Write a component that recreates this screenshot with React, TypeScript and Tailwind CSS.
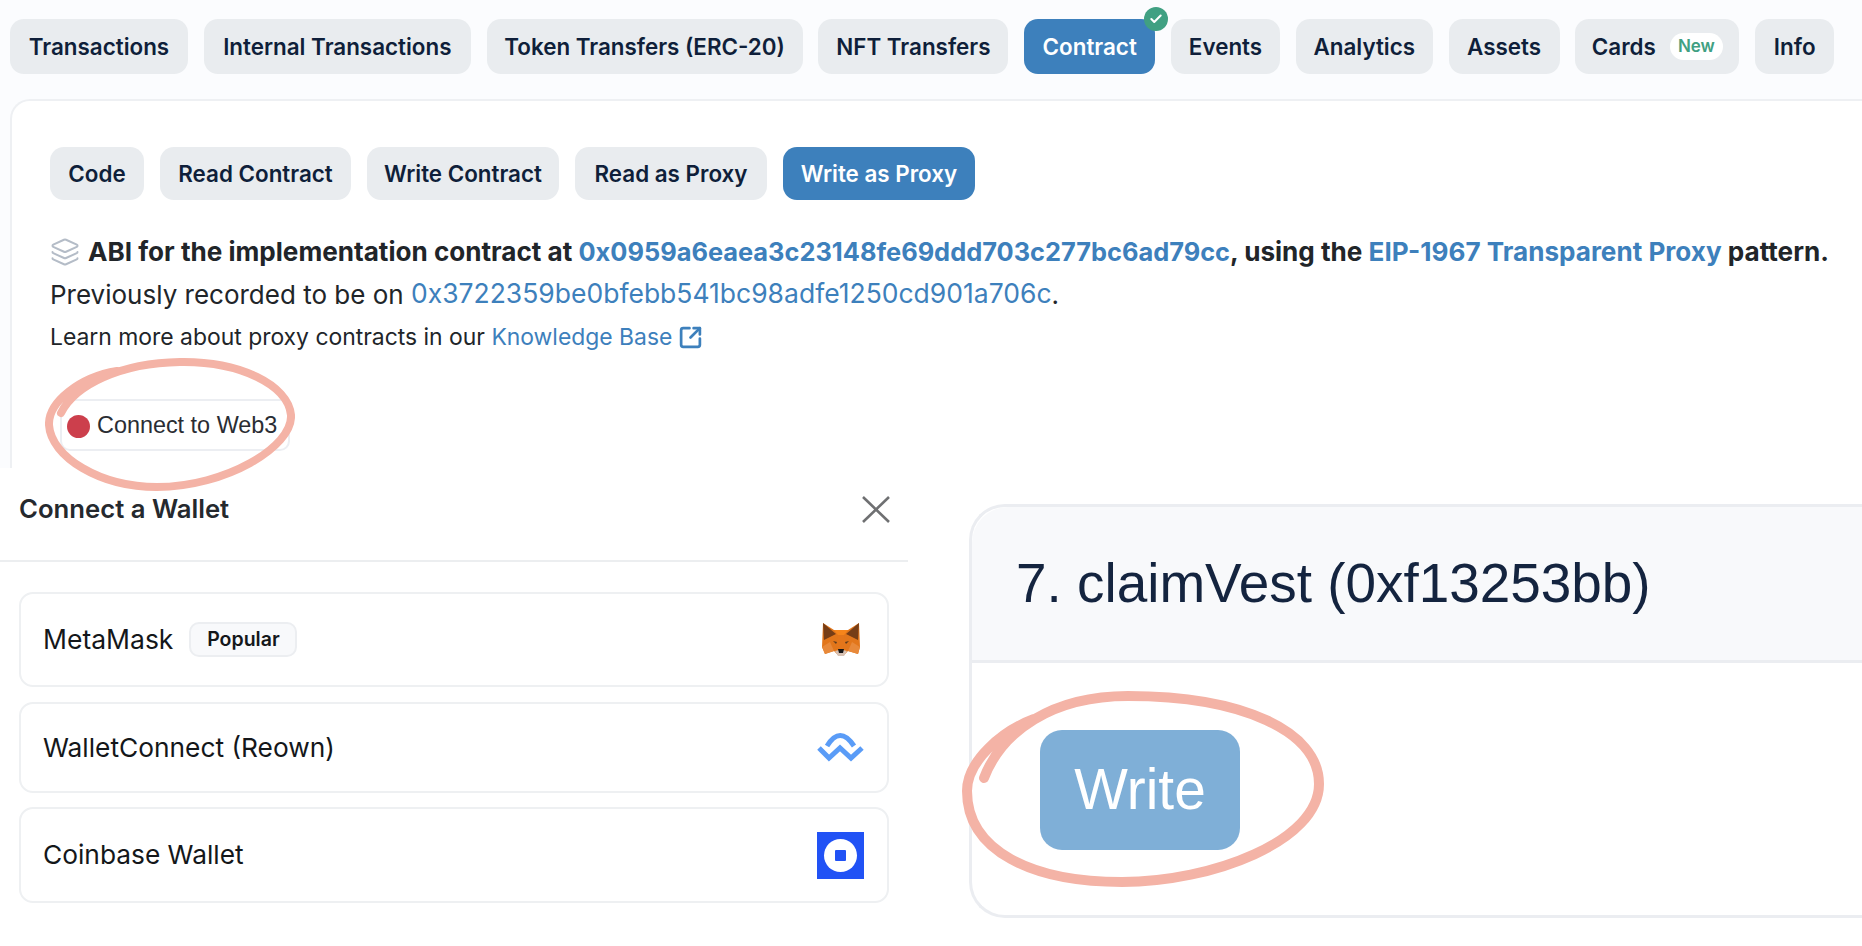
import { Layers, SquareArrowOutUpRight, Check } from 'lucide-react'

const tabs = [
  { label: 'Transactions', w: 'w-[178px]' },
  { label: 'Internal Transactions', w: 'w-[267px]' },
  { label: 'Token Transfers (ERC-20)', w: 'w-[316px]' },
  { label: 'NFT Transfers', w: 'w-[190px]' },
  { label: 'Contract', w: 'w-[131px]', active: true, check: true },
  { label: 'Events', w: 'w-[109px]' },
  { label: 'Analytics', w: 'w-[137px]' },
  { label: 'Assets', w: 'w-[111px]' },
  { label: 'Cards', w: 'w-[164px]', badge: 'New' },
  { label: 'Info', w: 'w-[79px]' },
]

const subTabs = [
  { label: 'Code', w: 'w-[94px]' },
  { label: 'Read Contract', w: 'w-[191px]' },
  { label: 'Write Contract', w: 'w-[192px]' },
  { label: 'Read as Proxy', w: 'w-[192px]' },
  { label: 'Write as Proxy', w: 'w-[192px]', active: true },
]

function FoxIcon() {
  return (
    <svg width="38" height="35" viewBox="0 0 38 35">
      <polygon points="1,1 12,8 26,8 37,1 38,25 36,32 26,29 21,34 17,34 12,29 3,32 0,25" fill="#e2761b" />
      <polygon points="12,8 26,8 22,13 16,13" fill="#f6851b" />
      <polygon points="1,1 14,12 2,18" fill="#763d16" />
      <polygon points="37,1 24,12 36,18" fill="#763d16" />
      <polygon points="16,13 22,13 24,24 19,28 14,24" fill="#e4761b" />
      <polygon points="0,25 8,20 12,29 3,32" fill="#e8893a" />
      <polygon points="38,25 30,20 26,29 36,32" fill="#e8893a" />
      <polygon points="11,19 15,20 14,22" fill="#5c3a1e" />
      <polygon points="27,19 23,20 24,22" fill="#5c3a1e" />
      <polygon points="13,29 17,28 21,28 25,29 22,34 16,34" fill="#d7c1b3" />
      <polygon points="16,27 22,27 21,31 17,31" fill="#161616" />
    </svg>
  )
}

function WalletConnectIcon() {
  return (
    <svg width="47" height="30" viewBox="0 0 47 30" fill="none" stroke="#5a9cf7" strokeWidth="5">
      <path d="M10 13 Q23 -8 37 13" />
      <path d="M2 15 L12 25 L23 15 L34 25 L45 15" />
    </svg>
  )
}

function CoinbaseIcon() {
  return (
    <div className="flex h-[47px] w-[47px] items-center justify-center bg-[#2152f5]">
      <div className="flex h-[33px] w-[33px] items-center justify-center rounded-full bg-white">
        <div className="h-[11px] w-[11px] rounded-[1px] bg-[#2152f5]" />
      </div>
    </div>
  )
}

export default function App() {
  return (
    <div className="flex h-[946px] w-[1862px] flex-col overflow-hidden bg-white font-['Inter',sans-serif]">
      <div className="flex h-[468px] flex-col bg-[#fbfcfe] pl-[10px] pt-[19px]">
        <div className="flex gap-[15.8px]">
          {tabs.map(t => (
            <div
              key={t.label}
              className={`relative flex h-[55px] items-center justify-center gap-[14px] rounded-[14px] text-[22.4px] font-semibold ${t.w} ${t.active ? 'bg-[#3d80bc] text-white' : 'bg-[#e9ecef] text-[#0f1f3a]'}`}
            >
              {t.label}
              {t.badge && (
                <span className="rounded-full bg-white px-[8px] py-[3px] text-[17px] font-semibold leading-[21px] text-[#40a082]">{t.badge}</span>
              )}
              {t.check && (
                <span className="absolute -right-[13px] -top-[12px] flex h-[24px] w-[24px] items-center justify-center rounded-full bg-[#40a082]">
                  <Check size={14} strokeWidth={3.5} className="text-white" />
                </span>
              )}
            </div>
          ))}
        </div>

        <div className="mt-[25px] flex-1 rounded-tl-[20px] border-l-2 border-t-2 border-[#eef0f3] bg-white pl-[38px] pt-[46px]">
          <div className="flex gap-[16px]">
            {subTabs.map(t => (
              <div
                key={t.label}
                className={`flex h-[53px] items-center justify-center rounded-[14px] text-[22.4px] font-semibold ${t.w} ${t.active ? 'bg-[#3d80bc] text-white' : 'bg-[#e9ecef] text-[#0f1f3a]'}`}
              >
                {t.label}
              </div>
            ))}
          </div>

          <div className="mt-[31px] flex h-[42px] items-center whitespace-nowrap text-[26.1px] font-bold text-[#212529]">
            <Layers size={30} strokeWidth={1.6} className="mr-[8px] text-[#b4bcc7]" />
            <span>ABI for the implementation contract at&nbsp;</span>
            <span className="text-[25.4px] text-[#3d80bc]">0x0959a6eaea3c23148fe69ddd703c277bc6ad79cc</span>
            <span>, using the&nbsp;</span>
            <span className="text-[#3d80bc]">EIP-1967 Transparent Proxy</span>
            <span>&nbsp;pattern.</span>
          </div>
          <div className="flex h-[42px] items-center whitespace-nowrap text-[26px] text-[#212529]">
            <span>Previously recorded to be on&nbsp;</span>
            <span className="text-[26.5px] text-[#3d80bc]">0x3722359be0bfebb541bc98adfe1250cd901a706c</span>
            <span>.</span>
          </div>
          <div className="flex h-[42px] items-center whitespace-nowrap pt-[2px] text-[22.9px] text-[#212529]">
            <span>Learn more about proxy contracts in our&nbsp;</span>
            <span className="text-[#3d80bc]">Knowledge Base</span>
            <SquareArrowOutUpRight size={25} strokeWidth={2.6} className="ml-[6px] text-[#3d80bc]" />
          </div>

          <div className="relative z-10 ml-[10px] mt-[42px] flex h-[52px] w-[230px] items-center gap-[7px] rounded-[10px] border-2 border-[#eceef2] bg-white pl-[5px] pt-[2px] font-['Liberation_Sans',sans-serif] text-[23.4px] text-[#2a2d33]">
            <span className="h-[23px] w-[23px] rounded-full bg-[#cc3f4c]" />
            Connect to Web3
            <svg className="absolute -left-[17px] -top-[44px] h-[134px] w-[250px]" viewBox="0 0 250 134" fill="none" stroke="#f4b3a6" strokeWidth="8" strokeLinecap="round">
              <path d="M16 56 C30 28 75 6 135 5 C195 4 243 28 246 58 C248 90 180 130 112 130 C55 130 6 100 4 68 C3 45 35 20 72 14" />
            </svg>
          </div>
        </div>
      </div>

      <div className="flex flex-1">
        <div className="w-[908px] pt-[22px]">
          <div className="flex h-[72px] items-start justify-between border-b-2 border-[#eceef0] pl-[19px] pr-[18px]">
            <span className="text-[25.7px] font-semibold leading-[38px] text-[#25292e]">Connect a Wallet</span>
            <svg className="mt-[6px]" width="28" height="27" viewBox="0 0 28 27" fill="none" stroke="#6f7072" strokeWidth="2.6">
              <path d="M1 1 L27 26 M27 1 L1 26" />
            </svg>
          </div>
          <div className="flex flex-col pl-[19px] pr-[19px] pt-[30px]">
            <div className="flex h-[95px] items-center justify-between rounded-[14px] border-2 border-[#eef0f2] pl-[22px] pr-[27px] text-[26.5px] text-[#14171a]">
              <div className="flex items-center gap-[16px]">
                MetaMask
                <span className="flex h-[35px] w-[108px] items-center justify-center rounded-[10px] border-2 border-[#eceef1] bg-[#f8f9fb] text-[19.5px] font-semibold text-[#14171a]">Popular</span>
              </div>
              <FoxIcon />
            </div>
            <div className="mt-[15px] flex h-[91px] items-center justify-between rounded-[14px] border-2 border-[#eef0f2] pl-[22px] pr-[23px] text-[26.3px] text-[#14171a]">
              WalletConnect (Reown)
              <WalletConnectIcon />
            </div>
            <div className="mt-[14px] flex h-[96px] items-center justify-between rounded-[14px] border-2 border-[#eef0f2] pl-[22px] pr-[23px] text-[26.3px] text-[#14171a]">
              Coinbase Wallet
              <CoinbaseIcon />
            </div>
          </div>
        </div>

        <div className="ml-[61px] mt-[36px] h-[414px] flex-1 rounded-l-[36px] border-y-[3px] border-l-[3px] border-[#ebedf1] font-['Liberation_Sans',sans-serif]">
          <div className="flex h-[156px] items-center rounded-tl-[36px] border-b-[3px] border-[#ebedf1] bg-[#f8f9fb] pl-[44px] text-[54.9px] text-[#14243f]">
            7. claimVest (0xf13253bb)
          </div>
          <div className="relative ml-[68px] mt-[67px] flex h-[120px] w-[200px] items-center justify-center rounded-[22px] bg-[#7fafd7] text-[56.8px] text-white">
            Write
            <svg className="absolute -left-[78px] -top-[39px] h-[196px] w-[363px]" viewBox="0 0 363 196" fill="none" stroke="#f4b3a6" strokeWidth="10" strokeLinecap="round">
              <path d="M22 87 C40 40 90 5 166 5 C280 5 357 40 357 93 C357 150 250 191 160 191 C70 191 5 160 5 100 C5 70 40 40 72 28" />
            </svg>
          </div>
        </div>
      </div>
    </div>
  )
}
